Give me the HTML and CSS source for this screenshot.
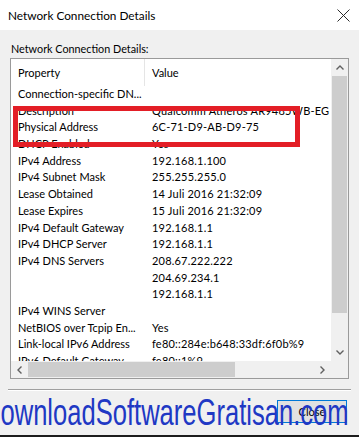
FILE: index.html
```html
<!DOCTYPE html>
<html>
<head>
<meta charset="utf-8">
<link rel="stylesheet" href="styles.css">
</head>
<body>
<div class="window">
  <div class="titlebar">
    <span class="title">Network Connection Details</span>
    <svg class="close-x" width="13" height="13" viewBox="0 0 13 13"><path d="M0.5 0.5 L12.5 12.5 M12.5 0.5 L0.5 12.5" stroke="#2b2b2b" stroke-width="1" fill="none"/></svg>
  </div>
  <div class="content">
    <div class="label">Network Connection Details:</div>
    <div class="listbox">
      <div class="viewport">
        <div class="header">
          <div class="hcell">Property</div>
          <div class="hcell hvalue">Value</div>
        </div>
        <div class="row"><div class="prop">Connection-specific DN...</div><div class="val"></div></div>
        <div class="row"><div class="prop">Description</div><div class="val">Qualcomm Atheros AR9485WB-EG Wireless Network Adapter</div></div>
        <div class="row"><div class="prop">Physical Address</div><div class="val">6C-71-D9-AB-D9-75</div></div>
        <div class="row"><div class="prop">DHCP Enabled</div><div class="val">Yes</div></div>
        <div class="row"><div class="prop">IPv4 Address</div><div class="val">192.168.1.100</div></div>
        <div class="row"><div class="prop">IPv4 Subnet Mask</div><div class="val">255.255.255.0</div></div>
        <div class="row"><div class="prop">Lease Obtained</div><div class="val">14 Juli 2016 21:32:09</div></div>
        <div class="row"><div class="prop">Lease Expires</div><div class="val">15 Juli 2016 21:32:09</div></div>
        <div class="row"><div class="prop">IPv4 Default Gateway</div><div class="val">192.168.1.1</div></div>
        <div class="row"><div class="prop">IPv4 DHCP Server</div><div class="val">192.168.1.1</div></div>
        <div class="row"><div class="prop">IPv4 DNS Servers</div><div class="val">208.67.222.222</div></div>
        <div class="row"><div class="prop"></div><div class="val">204.69.234.1</div></div>
        <div class="row"><div class="prop"></div><div class="val">192.168.1.1</div></div>
        <div class="row"><div class="prop">IPv4 WINS Server</div><div class="val"></div></div>
        <div class="row"><div class="prop">NetBIOS over Tcpip En...</div><div class="val">Yes</div></div>
        <div class="row"><div class="prop">Link-local IPv6 Address</div><div class="val">fe80::284e:b648:33df:6f0b%9</div></div>
        <div class="row"><div class="prop">IPv6 Default Gateway</div><div class="val">fe80::1%9</div></div>
      </div>
      <div class="vscroll">
        <div class="sbtn"><svg width="8" height="5" viewBox="0 0 8 5"><polyline points="0.5,4.5 4,1 7.5,4.5" stroke="#606060" stroke-width="1.4" fill="none"/></svg></div>
        <div class="vthumb"></div>
        <div class="track"></div>
        <div class="sbtn"><svg width="8" height="5" viewBox="0 0 8 5"><polyline points="0.5,0.5 4,4 7.5,0.5" stroke="#606060" stroke-width="1.4" fill="none"/></svg></div>
      </div>
      <div class="hscroll">
        <div class="sbtn"><svg width="5" height="8" viewBox="0 0 5 8"><polyline points="4.5,0.5 1,4 4.5,7.5" stroke="#606060" stroke-width="1.4" fill="none"/></svg></div>
        <div class="hthumb"></div>
        <div class="track"></div>
        <div class="sbtn"><svg width="5" height="8" viewBox="0 0 5 8"><polyline points="0.5,0.5 4,4 0.5,7.5" stroke="#606060" stroke-width="1.4" fill="none"/></svg></div>
      </div>
      <div class="corner"></div>
    </div>
    <div class="separator"></div>
    <div class="footer">
      <button class="btn">Close</button>
    </div>
  </div>
  <div class="highlight"></div>
  <div class="watermark">DownloadSoftwareGratisan.com</div>
</div>
</body>
</html>
```
FILE: styles.css
```css
body {
  margin: 0;
}
.window {
  position: relative;
  width: 359px;
  height: 437px;
  box-sizing: border-box;
  background: #f0f0f0;
  border-bottom: 2px solid #1c1c1c;
  overflow: hidden;
  font-family: Lato, "Liberation Sans", sans-serif;
  color: #000;
}
.titlebar {
  height: 30px;
  background: #fff;
  display: flex;
  align-items: center;
  justify-content: space-between;
  padding: 0 9px 0 8px;
  font-size: 11.8px;
}
.close-x {
  display: block;
}
.content {
  padding: 12px 0 0 10px;
}
.label {
  font-size: 10.8px;
  line-height: 14px;
  height: 14px;
  padding-left: 1px;
  margin-bottom: 2px;
}
.listbox {
  width: 339px;
  height: 321px;
  box-sizing: border-box;
  border: 1px solid #9a9a9a;
  background: #fff;
  display: grid;
  grid-template-columns: 1fr 17px;
  grid-template-rows: 1fr 17px;
  font-size: 11px;
}
.viewport {
  overflow: hidden;
  min-width: 0;
  min-height: 0;
}
.header {
  display: flex;
  height: 27px;
}
.hcell {
  width: 134px;
  box-sizing: border-box;
  padding-left: 7px;
  border-right: 1px solid #e5e5e5;
  display: flex;
  align-items: center;
}
.hcell.hvalue {
  border-right: none;
  flex: 1;
}
.row {
  display: flex;
  height: 16.7px;
  line-height: 16.7px;
  white-space: nowrap;
}
.prop {
  width: 134px;
  flex: none;
  box-sizing: border-box;
  padding-left: 7px;
}
.val {
  padding-left: 7px;
  letter-spacing: 0.2px;
}
.vscroll {
  background: #f0f0f0;
  display: flex;
  flex-direction: column;
}
.hscroll {
  background: #f0f0f0;
  display: flex;
}
.sbtn {
  width: 17px;
  height: 17px;
  flex: none;
  display: flex;
  align-items: center;
  justify-content: center;
}
.sbtn svg {
  display: block;
}
.vthumb {
  height: 237px;
  margin: 0 1px;
  background: #cdcdcd;
  flex: none;
}
.hthumb {
  width: 207px;
  margin: 1px 0;
  background: #cdcdcd;
  flex: none;
}
.track {
  flex: 1;
}
.corner {
  background: #f0f0f0;
}
.separator {
  margin: 10px 0 0 -2px;
  width: 343px;
  height: 0;
  border-top: 1px solid #a0a0a0;
  border-bottom: 1px solid #ffffff;
}
.footer {
  display: flex;
  justify-content: flex-end;
  padding: 9px 12px 0 0;
}
.btn {
  width: 70px;
  height: 23px;
  box-sizing: border-box;
  border: 1px solid #0078d7;
  background: #e1e1e1;
  font-family: Lato, "Liberation Sans", sans-serif;
  font-size: 11px;
  color: #000;
  padding: 0;
  margin: 0;
}
.highlight {
  position: absolute;
  left: 13px;
  top: 106px;
  width: 287px;
  height: 41px;
  box-sizing: border-box;
  border: 5px solid #e31e26;
}
.watermark {
  position: absolute;
  left: -18.5px;
  top: 394.5px;
  font-family: "Liberation Sans", Arial, sans-serif;
  font-size: 36px;
  line-height: 36px;
  color: #2038c4;
  white-space: nowrap;
  transform: scaleX(0.71);
  transform-origin: left top;
}
```
